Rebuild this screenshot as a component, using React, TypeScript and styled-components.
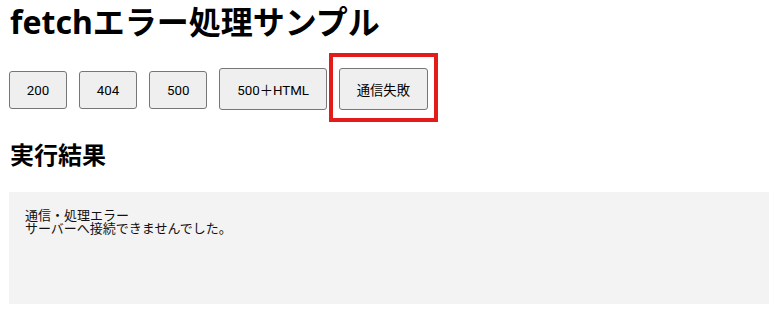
import React from 'react';
import styled, { createGlobalStyle } from 'styled-components';

const GlobalStyle = createGlobalStyle`
  body {
    margin: 0;
    background: #ffffff;
    color: #000000;
    font-family: Roboto, "Noto Sans CJK JP", sans-serif;
  }
`;

const Page = styled.main`
  padding: 2px 14px 0 9px;
`;

const Title = styled.h1`
  margin: 0 0 26px;
  padding-left: 1px;
  font-family: "Noto Sans", "Noto Sans CJK JP", sans-serif;
  font-size: 32px;
  font-weight: 700;
  line-height: 40px;
`;

const ButtonRow = styled.div`
  display: flex;
  align-items: baseline;
  gap: 12.3px;
`;

const ActionButton = styled.button<{ marked?: boolean }>`
  position: relative;
  padding: 10.5px 16.7px;
  border: 1px solid #767676;
  border-radius: 3px;
  background: #efefef;
  color: #000000;
  font-family: Roboto, "Noto Sans CJK JP", sans-serif;
  font-size: 13.333px;
  line-height: normal;
  cursor: pointer;

  &::after {
    content: '';
    display: ${props => (props.marked ? 'block' : 'none')};
    position: absolute;
    top: -16px;
    left: -11px;
    right: -11px;
    bottom: -13px;
    border: 4px solid #e21b1b;
    pointer-events: none;
  }
`;

const SectionTitle = styled.h2`
  margin: 29px 0 21px;
  padding-left: 1px;
  font-family: "Noto Sans", "Noto Sans CJK JP", sans-serif;
  font-size: 24px;
  font-weight: 700;
  line-height: 32px;
`;

const ResultBox = styled.pre`
  margin: 0;
  min-height: 80px;
  padding: 16px;
  background: #f3f3f3;
  color: #111111;
  font-family: "Noto Sans CJK JP", sans-serif;
  font-size: 13px;
  line-height: 13px;
  white-space: pre-wrap;
`;

const cases = [
  { id: '200', label: '200' },
  { id: '404', label: '404' },
  { id: '500', label: '500' },
  { id: '500html', label: '500＋HTML' },
  { id: 'network', label: '通信失敗' },
];

export default function App() {
  const [selected, setSelected] = React.useState('network');

  return (
    <>
      <GlobalStyle />
      <Page>
        <Title>fetchエラー処理サンプル</Title>
        <ButtonRow>
          {cases.map(c => (
            <ActionButton
              key={c.id}
              marked={c.id === selected}
              onClick={() => setSelected(c.id)}
            >
              {c.label}
            </ActionButton>
          ))}
        </ButtonRow>
        <SectionTitle>実行結果</SectionTitle>
        <ResultBox>{'通信・処理エラー\nサーバーへ接続できませんでした。'}</ResultBox>
      </Page>
    </>
  );
}
